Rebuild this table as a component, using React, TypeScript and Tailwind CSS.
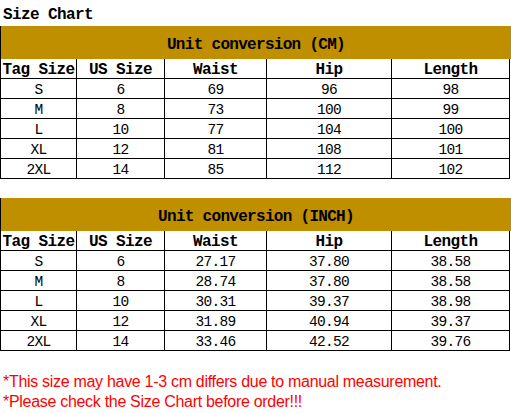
const widths = ["w-[76px]", "w-[88px]", "w-[102px]", "w-[125px]", "w-[118px]"];

const headers = ["Tag Size", "US Size", "Waist", "Hip", "Length"];

const cmRows = [
  ["S", "6", "69", "96", "98"],
  ["M", "8", "73", "100", "99"],
  ["L", "10", "77", "104", "100"],
  ["XL", "12", "81", "108", "101"],
  ["2XL", "14", "85", "112", "102"],
];

const inchRows = [
  ["S", "6", "27.17", "37.80", "38.58"],
  ["M", "8", "28.74", "37.80", "38.58"],
  ["L", "10", "30.31", "39.37", "38.98"],
  ["XL", "12", "31.89", "40.94", "39.37"],
  ["2XL", "14", "33.46", "42.52", "39.76"],
];

const mono = "font-['Liberation_Mono','DejaVu_Sans_Mono',monospace]";

function Row({ cells, header = false }: { cells: string[]; header?: boolean }) {
  return (
    <div className="flex h-[20px] border-l border-black">
      {cells.map((c, i) => (
        <div
          key={i}
          className={`${widths[i]} flex items-center justify-center border-r border-b border-black whitespace-pre ${
            header
              ? "pt-[2px] text-[16px] font-bold tracking-[-0.6px]"
              : "pt-[3px] text-[14.5px] tracking-[-0.7px]"
          }`}
        >
          {c}
        </div>
      ))}
    </div>
  );
}

function ConversionTable({ title, rows }: { title: string; rows: string[][] }) {
  return (
    <div className={`${mono} text-black leading-none`}>
      <div className="flex h-[33px] items-center justify-center border-l border-black bg-[#bf8f00] pt-[4px] text-[16px] font-bold tracking-[-0.7px]">
        {title}
      </div>
      <Row cells={headers} header />
      {rows.map((r, i) => (
        <Row key={i} cells={r} />
      ))}
    </div>
  );
}

export default function App() {
  return (
    <div className="w-[511px] h-[413px] overflow-hidden bg-white">
      <div className={`${mono} h-[26px] pl-[3px] pt-[7px] text-[16px] font-bold leading-none tracking-[-0.6px]`}>
        Size Chart
      </div>
      <ConversionTable title="Unit conversion (CM)" rows={cmRows} />
      <div className="h-[19px]" />
      <ConversionTable title="Unit conversion (INCH)" rows={inchRows} />
      <div className="mt-[21px] pl-[3px] font-['Liberation_Sans',Arial,sans-serif] text-[16px] leading-[20px] tracking-[-0.3px] text-[#ff0000]">
        <p>*This size may have 1-3 cm differs due to manual measurement.</p>
        <p>*Please check the Size Chart before order!!!</p>
      </div>
    </div>
  );
}
